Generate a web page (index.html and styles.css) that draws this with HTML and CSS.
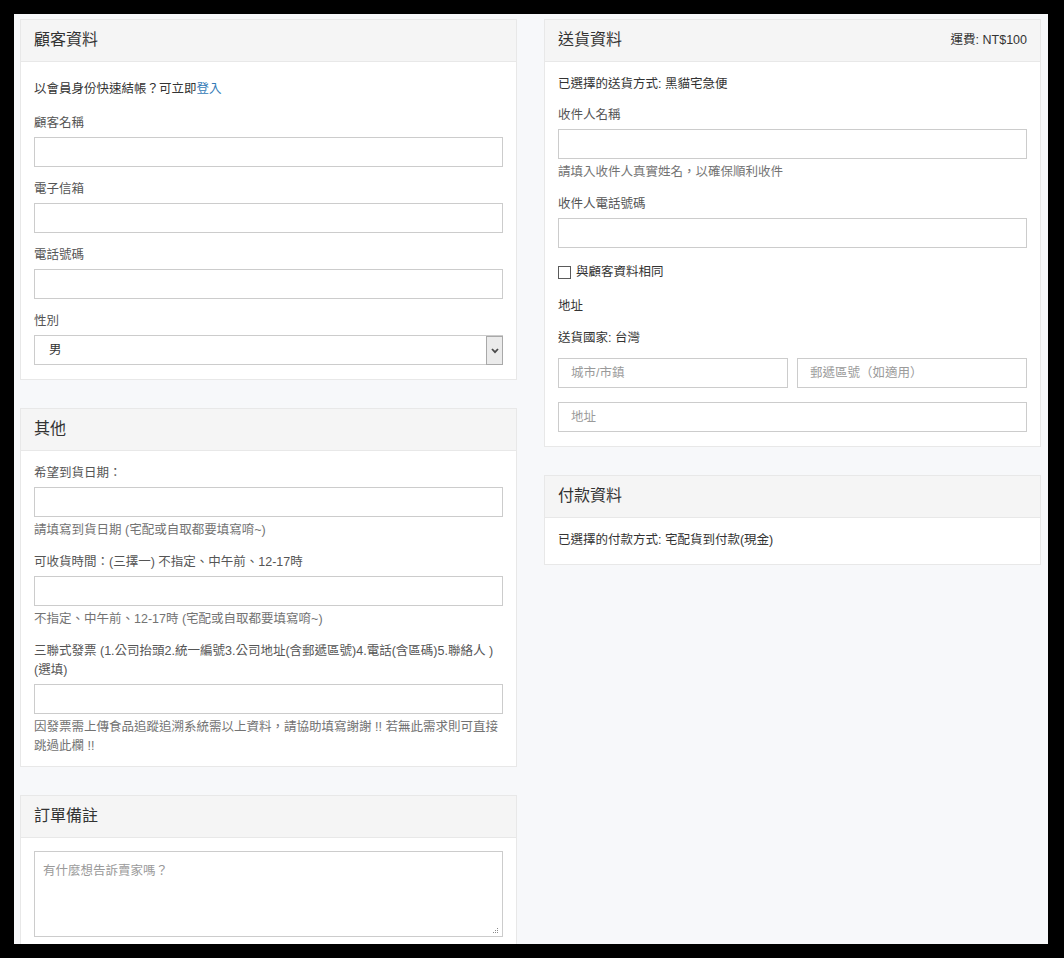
FILE: index.html
```html
<!DOCTYPE html>
<html lang="zh-Hant">
<head>
<meta charset="utf-8">
<title>結帳</title>
<link rel="stylesheet" href="styles.css">
</head>
<body>
<div class="frame">
  <div class="layout">
    <div class="col">
      <section class="panel">
        <div class="panel-head"><h2 class="panel-title">顧客資料</h2></div>
        <div class="panel-body">
          <p class="intro">以會員身份快速結帳？可立即<a href="#" class="link">登入</a></p>
          <div class="field">
            <label class="label">顧客名稱</label>
            <input class="input" type="text">
          </div>
          <div class="field">
            <label class="label">電子信箱</label>
            <input class="input" type="text">
          </div>
          <div class="field">
            <label class="label">電話號碼</label>
            <input class="input" type="text">
          </div>
          <div class="field">
            <label class="label">性別</label>
            <div class="select-wrap">
              <select class="select"><option>男</option><option>女</option></select>
              <span class="select-arrow"><svg width="8" height="6" viewBox="0 0 8 6"><polyline points="1,1 4,4.2 7,1" fill="none" stroke="#4a4a4a" stroke-width="1.8"/></svg></span>
            </div>
          </div>
        </div>
      </section>

      <section class="panel">
        <div class="panel-head"><h2 class="panel-title">其他</h2></div>
        <div class="panel-body panel-body-other">
          <div class="field">
            <label class="label">希望到貨日期：</label>
            <input class="input" type="text">
            <p class="help">請填寫到貨日期 (宅配或自取都要填寫唷~)</p>
          </div>
          <div class="field">
            <label class="label">可收貨時間：(三擇一) 不指定、中午前、12-17時</label>
            <input class="input" type="text">
            <p class="help">不指定、中午前、12-17時 (宅配或自取都要填寫唷~)</p>
          </div>
          <div class="field">
            <label class="label">三聯式發票 (1.公司抬頭2.統一編號3.公司地址(含郵遞區號)4.電話(含區碼)5.聯絡人 ) (選填)</label>
            <input class="input" type="text">
            <p class="help">因發票需上傳食品追蹤追溯系統需以上資料，請協助填寫謝謝 !! 若無此需求則可直接跳過此欄 !!</p>
          </div>
        </div>
      </section>

      <section class="panel">
        <div class="panel-head"><h2 class="panel-title">訂單備註</h2></div>
        <div class="panel-body">
          <div class="textarea-wrap">
            <textarea class="textarea" placeholder="有什麼想告訴賣家嗎？"></textarea>
            <span class="grip"><svg width="6" height="6" viewBox="0 0 6 6"><rect x="4" y="0" width="1" height="1" fill="#8a8a8a"/><rect x="2" y="2" width="1" height="1" fill="#8a8a8a"/><rect x="4" y="2" width="1" height="1" fill="#8a8a8a"/><rect x="0" y="4" width="1" height="1" fill="#8a8a8a"/><rect x="2" y="4" width="1" height="1" fill="#8a8a8a"/><rect x="4" y="4" width="1" height="1" fill="#8a8a8a"/></svg></span>
          </div>
        </div>
      </section>
    </div>

    <div class="col">
      <section class="panel">
        <div class="panel-head">
          <h2 class="panel-title">送貨資料</h2>
          <span class="fee">運費: NT$100</span>
        </div>
        <div class="panel-body">
          <p class="selected">已選擇的送貨方式: 黑貓宅急便</p>
          <div class="field">
            <label class="label">收件人名稱</label>
            <input class="input" type="text">
            <p class="help">請填入收件人真實姓名，以確保順利收件</p>
          </div>
          <div class="field field-phone">
            <label class="label">收件人電話號碼</label>
            <input class="input" type="text">
          </div>
          <label class="check-row"><input class="checkbox" type="checkbox"><span>與顧客資料相同</span></label>
          <p class="plain address-title">地址</p>
          <p class="plain country">送貨國家: 台灣</p>
          <div class="address-row">
            <input class="input" type="text" placeholder="城市/市鎮">
            <input class="input" type="text" placeholder="郵遞區號（如適用）">
          </div>
          <input class="input" type="text" placeholder="地址">
        </div>
      </section>

      <section class="panel">
        <div class="panel-head"><h2 class="panel-title">付款資料</h2></div>
        <div class="panel-body">
          <p class="plain">已選擇的付款方式: 宅配貨到付款(現金)</p>
        </div>
      </section>
    </div>
  </div>
</div>
</body>
</html>
```

FILE: styles.css
```css
* {
  box-sizing: border-box;
}

html,
body {
  margin: 0;
  padding: 0;
  background: #000;
}

body {
  font-family: "Liberation Sans", "Noto Sans CJK TC", sans-serif;
  font-size: 12.5px;
  line-height: 19px;
  color: #333;
}

.frame {
  margin: 14px;
  width: 1034px;
  height: 930px;
  background: #f7f8fa;
  overflow: hidden;
  padding: 5px 0 0 6px;
}

.layout {
  display: flex;
  align-items: flex-start;
  gap: 27px;
}

.col {
  width: 497px;
  display: flex;
  flex-direction: column;
  gap: 28px;
}

.panel {
  background: #fff;
  border: 1px solid #e8e8e8;
}

.panel-head {
  background: #f5f5f5;
  border-bottom: 1px solid #e8e8e8;
  padding: 10px 13px 11px;
  display: flex;
  justify-content: space-between;
  align-items: center;
}

.panel-title {
  margin: 0;
  font-size: 16px;
  font-weight: normal;
  line-height: 20px;
  color: #333;
}

.fee {
  font-size: 12.5px;
  line-height: 20px;
  color: #333;
}

.panel-body {
  padding: 13px 13px 14px;
}

.panel-body-other {
  padding-bottom: 10px;
}

.intro {
  margin: 5px 0 15px;
}

.link {
  color: #337ab7;
  text-decoration: none;
}

.field {
  margin-bottom: 13px;
}

.field:last-child {
  margin-bottom: 0;
}

.field-phone {
  margin-bottom: 15px;
}

.label {
  display: block;
  margin-bottom: 4px;
  color: #555;
}

.input {
  display: block;
  width: 100%;
  height: 30px;
  margin: 0;
  border: 1px solid #ccc;
  border-radius: 0;
  padding: 0 12px;
  font: inherit;
  color: #333;
  background: #fff;
  outline: none;
}

.input::placeholder,
.textarea::placeholder {
  color: #9a9a9a;
}

.help {
  margin: 4px 0 0;
  color: #737373;
}

.select-wrap {
  position: relative;
}

.select {
  display: block;
  width: 100%;
  height: 30px;
  margin: 0;
  border: 1px solid #ccc;
  border-radius: 0;
  padding: 0 22px 0 14px;
  font: inherit;
  color: #333;
  background: #fff;
  appearance: none;
  -webkit-appearance: none;
  outline: none;
}

.select-arrow {
  position: absolute;
  top: 1px;
  right: 0;
  bottom: 0;
  width: 17px;
  background: #ebebeb;
  border: 1px solid #a9a9a9;
  display: flex;
  align-items: center;
  justify-content: center;
  pointer-events: none;
}

.select-arrow svg {
  display: block;
}

.textarea-wrap {
  position: relative;
}

.textarea {
  display: block;
  width: 100%;
  height: 86px;
  margin: 0;
  border: 1px solid #ccc;
  border-radius: 0;
  padding: 10px 8px;
  font: inherit;
  color: #333;
  background: #fff;
  resize: none;
  outline: none;
}

.grip {
  position: absolute;
  right: 4px;
  bottom: 3px;
  width: 6px;
  height: 6px;
  pointer-events: none;
}

.grip svg {
  display: block;
}

.selected {
  margin: 0 0 12px;
}

.check-row {
  display: flex;
  align-items: center;
  gap: 5px;
  margin-bottom: 15px;
  color: #333;
}

.checkbox {
  appearance: none;
  -webkit-appearance: none;
  width: 13px;
  height: 13px;
  margin: 0;
  border: 1px solid #5a5a5a;
  background: #fff;
  flex: none;
}

.plain {
  margin: 0;
}

.address-title {
  margin-bottom: 13px;
}

.country {
  margin-bottom: 10px;
}

.address-row {
  display: grid;
  grid-template-columns: 1fr 1fr;
  gap: 9px;
  margin-bottom: 14px;
}
```
